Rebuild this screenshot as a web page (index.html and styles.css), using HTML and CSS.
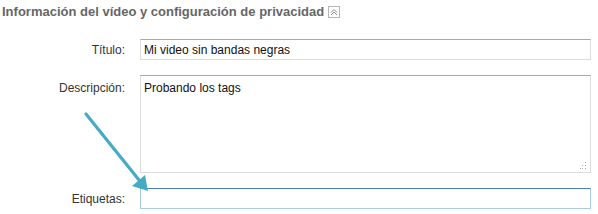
FILE: index.html
```html
<!DOCTYPE html>
<html lang="es">
<head>
<meta charset="utf-8">
<link rel="stylesheet" href="styles.css">
</head>
<body>
<div class="panel">
  <h2 class="heading">Información del vídeo y configuración de privacidad <span class="collapse"><svg width="12" height="12" viewBox="0 0 12 12"><rect x="0.5" y="0.5" width="11" height="11" fill="#fff" stroke="#b5b5b5"/><path d="M3 6.5 L6 3.5 L9 6.5 M3 9 L6 6 L9 9" fill="none" stroke="#8a8a8a" stroke-width="1"/></svg></span></h2>
  <div class="form">
    <label class="label label-mid">Título:</label>
    <div class="field input">Mi video sin bandas negras</div>
    <label class="label label-top">Descripción:</label>
    <div class="field textarea">Probando los tags<span class="grip"><svg width="7" height="7" viewBox="0 0 7 7"><rect x="5" y="0" width="1" height="1" fill="#aaa"/><rect x="5" y="3" width="1" height="1" fill="#aaa"/><rect x="2" y="3" width="1" height="1" fill="#aaa"/><rect x="5" y="6" width="1" height="1" fill="#aaa"/><rect x="2" y="6" width="1" height="1" fill="#aaa"/><rect x="0" y="6" width="1" height="1" fill="#aaa"/></svg></span></div>
    <label class="label label-mid">Etiquetas:</label>
    <div class="field input focus"></div>
  </div>
  <svg class="arrow" width="160" height="200" viewBox="0 0 160 200"><line x1="86" y1="114" x2="139" y2="180" stroke="#46abc5" stroke-width="3.2" stroke-linecap="round"/><polygon points="148,191 132,186 145,175" fill="#46abc5"/></svg>
</div>
</body>
</html>
```
FILE: styles.css
```css
html, body {
  margin: 0;
  padding: 0;
  background: #fff;
}
body {
  font-family: "Liberation Sans", Arial, sans-serif;
  width: 598px;
  height: 214px;
  overflow: hidden;
}
.panel {
  position: relative;
  padding: 4px 0 0 2px;
}
.heading {
  margin: 0;
  font-size: 13px;
  font-weight: bold;
  color: #666;
  line-height: 16px;
  height: 16px;
  display: flex;
  align-items: center;
}
.collapse {
  display: inline-flex;
  margin-left: 4px;
}
.form {
  display: grid;
  grid-template-columns: 123px 451px;
  column-gap: 15px;
  row-gap: 15px;
  margin-top: 18px;
  padding-top: 1px;
}
.label {
  font-size: 12px;
  color: #333;
  text-align: right;
}
.label-mid {
  align-self: center;
}
.label-top {
  padding-top: 6px;
}
.field {
  box-sizing: border-box;
  background: #fff;
  border: 1px solid #dcdcdc;
  border-top-color: #a8a8a8;
  font-size: 12px;
  color: #111;
  padding: 3px 3px 0 3px;
  position: relative;
}
.input {
  height: 21px;
}
.textarea {
  height: 98px;
  padding-top: 5px;
}
.focus {
  border-color: #a9cbe4;
  border-top-color: #4d7fae;
}
.grip {
  position: absolute;
  right: 3px;
  bottom: 3px;
  display: flex;
}
.arrow {
  position: absolute;
  left: 0;
  top: 0;
  pointer-events: none;
}
```
